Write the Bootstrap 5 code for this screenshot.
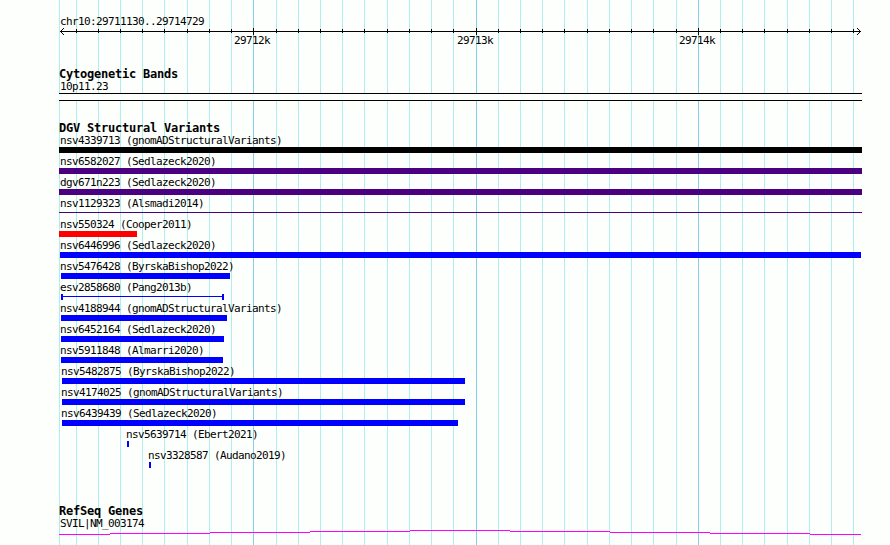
<!DOCTYPE html>
<html lang="en">
<head>
<meta charset="utf-8">
<title>chr10:29711130..29714729</title>
<link href="https://cdn.jsdelivr.net/npm/bootstrap@5.3.0/dist/css/bootstrap.min.css" rel="stylesheet">
<style>
body{background:#fdfffc;color:#000;width:890px;height:545px;font-family:"DejaVu Sans Mono",monospace;font-size:11px;line-height:13px;letter-spacing:-.622px}
.grid-lines{z-index:0}
.browser{z-index:1;height:545px;padding-left:59px}
.browser div{white-space:pre}
svg{shape-rendering:crispEdges}
.region-name{padding:15px 0 0 1px;height:28px}
.scale-row{height:34px;margin-top:-1px}
.scale-row span{width:36px}
.track-title{font-size:12px;font-weight:700;letter-spacing:-.224px;height:12px;line-height:12px}
.track-label{padding-left:1px;height:13px}
.band{width:803px;height:8px;border:solid #000;border-width:1px 0;background:#fdfffc}
#variants{margin-top:21px;height:383px;flex-shrink:0}
.gene-curve{margin-top:-1px}
.variant{height:21px}
.glyph{height:6px;background:#00f}
.g-black{background:#000}
.g-indigo{background:#4b0082}
.g-red{background:#f00}
.g-thin{height:1px;margin-top:2px;background:#4b0082}
.g-span{background:linear-gradient(#00f,#00f) 0 2px/100% 1px no-repeat;border:solid #00f;border-width:0 2px}
</style>
<script src="https://cdn.jsdelivr.net/npm/bootstrap@5.3.0/dist/js/bootstrap.bundle.min.js"></script>
</head>
<body class="m-0 position-relative overflow-hidden">
<svg class="grid-lines position-absolute top-0 start-0" width="890" height="545" id="grid"></svg>
<main class="browser position-relative d-flex flex-column overflow-hidden">
  <div class="region-name">chr10:29711130..29714729</div>
  <svg class="d-block flex-shrink-0" width="803" height="7" id="axis"></svg>
  <div class="scale-row d-flex flex-shrink-0"><span style="margin-left:175px">29712k</span><span style="margin-left:187px">29713k</span><span style="margin-left:186px">29714k</span></div>
  <section>
    <div class="track-title">Cytogenetic Bands</div>
    <div class="track-label">10p11.23</div>
    <div class="band"></div>
  </section>
  <section id="variants">
    <div class="track-title">DGV Structural Variants</div>
  </section>
  <section id="genes">
    <div class="track-title">RefSeq Genes</div>
    <div class="track-label">SVIL|NM_003174</div>
    <svg class="gene-curve d-block" width="803" height="12"><path fill="none" stroke="#f0f" d="M0 5.5H51M51 4.5H151M151 3.5H251M251 2.5H351M351 1.5H451M451 2.5H551M551 3.5H651M651 4.5H751M751 5.5H802"/></svg>
  </section>
</main>
<script>
// Vertical guides and ruler ticks, every 100 bases; each tenth one is major.
let grid = '<path stroke="#afeeee" d="M59.5 0V545"/>', axis = '';
for (let k = -8; k <= 27; k++) {
  const x = Math.floor(253.8 + k * 200 / 9), major = k % 10 === 0;
  grid += `<path stroke="${major ? '#87ceeb' : '#afeeee'}" d="M${x + .5} 0V545"/>`;
  axis += `<path stroke="#000" d="M${x - 58.5} ${major ? '0V7' : '1V5'}"/>`;
}
axis += '<path stroke="#000" d="M1 3.5H802"/>';
for (let i = 1; i <= 3; i++)
  for (const y of [3 - i, 3 + i])
    axis += `<rect x="${1 + i}" y="${y}" width="1" height="1"/><rect x="${801 - i}" y="${y}" width="1" height="1"/>`;
document.getElementById('grid').innerHTML = grid;
document.getElementById('axis').innerHTML = axis;

// name, label offset, bar start, bar width, style
const variants = [
  ['nsv4339713 (gnomADStructuralVariants)', 1, 0, 803, 'g-black'],
  ['nsv6582027 (Sedlazeck2020)', 1, 0, 803, 'g-indigo'],
  ['dgv671n223 (Sedlazeck2020)', 1, 0, 803, 'g-indigo'],
  ['nsv1129323 (Alsmadi2014)', 1, 0, 803, 'g-thin'],
  ['nsv550324 (Cooper2011)', 1, 0, 78, 'g-red'],
  ['nsv6446996 (Sedlazeck2020)', 1, 1, 801, ''],
  ['nsv5476428 (ByrskaBishop2022)', 1, 2, 169, ''],
  ['esv2858680 (Pang2013b)', 1, 2, 163, 'g-span'],
  ['nsv4188944 (gnomADStructuralVariants)', 1, 2, 166, ''],
  ['nsv6452164 (Sedlazeck2020)', 1, 2, 163, ''],
  ['nsv5911848 (Almarri2020)', 1, 2, 162, ''],
  ['nsv5482875 (ByrskaBishop2022)', 2, 3, 403, ''],
  ['nsv4174025 (gnomADStructuralVariants)', 2, 3, 403, ''],
  ['nsv6439439 (Sedlazeck2020)', 2, 3, 396, ''],
  ['nsv5639714 (Ebert2021)', 67, 68, 2, ''],
  ['nsv3328587 (Audano2019)', 89, 90, 2, '']
];
document.getElementById('variants').insertAdjacentHTML('beforeend', variants.map(v =>
  `<div class="variant d-flex flex-column"><div class="track-label" style="padding-left:${v[1]}px">${v[0]}</div><div class="glyph ${v[4]}" style="margin-left:${v[2]}px;width:${v[3]}px"></div></div>`).join(''));
</script>
</body>
</html>
